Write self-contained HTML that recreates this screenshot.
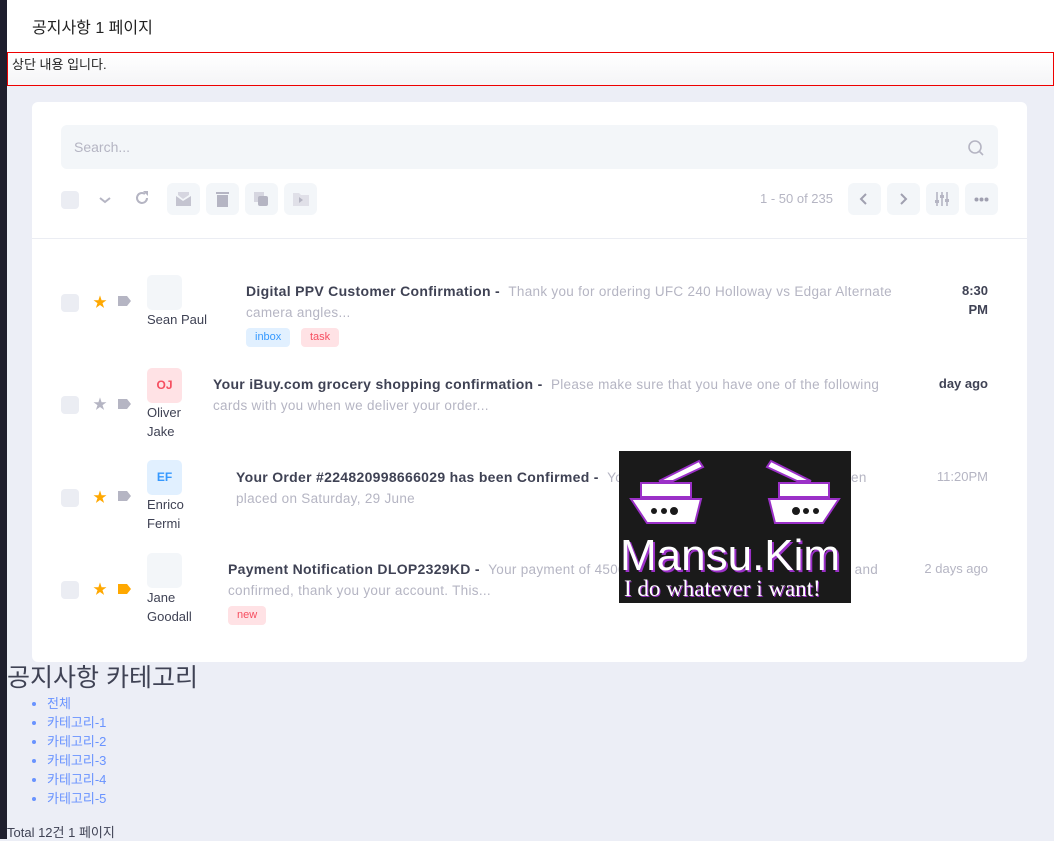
<!DOCTYPE html>
<html><head><meta charset="utf-8"><style>
*{box-sizing:border-box;margin:0;padding:0}
body{width:1054px;height:839px;overflow:hidden;background:#eceef6;font-family:"Liberation Sans","Noto Sans CJK KR",sans-serif;position:relative;color:#3f4254}
.a{position:absolute}
.strip{left:0;top:0;width:7px;height:839px;background:#1e1e2d}
.hdr{left:7px;top:0;width:1047px;height:52px;background:#fff}
.box{left:7px;top:52px;width:1047px;height:34px;border:1px solid #e00;background:linear-gradient(#fff,#f5f5f7)}
.card{left:32px;top:102px;width:995px;height:560px;background:#fff;border-radius:6px}
.btn{background:#f3f6f9;border-radius:6px}
.cb{width:18px;height:18px;background:#ebedf3;border-radius:4px}
.subj{font-size:14px;font-weight:bold;color:#3f4254;line-height:20px;letter-spacing:0.3px}
.prev{font-size:13.5px;color:#b5b5c3;font-weight:normal;letter-spacing:0.3px}
.name{font-size:13px;color:#3f4254;line-height:19px}
.tag{font-size:11px;border-radius:4px;height:19px;line-height:19px;padding:0 9px}
.av{width:35px;height:35px;border-radius:5px;background:#f3f6f9;font-size:12px;font-weight:bold;text-align:center;line-height:35px}
.time{font-size:13px;text-align:right;line-height:19px}
.star{font-size:14px}
li{font-size:13px;line-height:19px;color:#6993ff}
</style></head><body>
<div class="a strip"></div>
<div class="a hdr"><span class="a" style="left:25px;top:14px;font-size:16px;color:#222">공지사항 1 페이지</span></div>
<div class="a box"><span class="a" style="left:4px;top:1px;font-size:13px;color:#222">상단 내용 입니다.</span></div>
<div class="a card">
 <div class="a btn" style="left:29px;top:23px;width:937px;height:44px"><span class="a" style="left:13px;top:14px;font-size:14px;color:#b5b5c3">Search...</span>
  <svg class="a" style="left:906px;top:14px" width="18" height="18" viewBox="0 0 18 18"><circle cx="8" cy="8" r="6" fill="none" stroke="#b5b5c3" stroke-width="1.6"/><path d="M12.5 12.5l3.5 3.5" stroke="#b5b5c3" stroke-width="1.6"/></svg></div>
 <div class="a cb" style="left:29px;top:89px"></div>
 <svg class="a" style="left:66px;top:92px" width="14" height="12"><path d="M2 4l5 4 5-4" stroke="#b5b5c3" stroke-width="2" fill="none"/></svg>
 <svg class="a" style="left:102px;top:88px" width="16" height="16"><path d="M13 8a5 5 0 1 1-2-4" stroke="#b5b5c3" stroke-width="2" fill="none"/><path d="M9 1h5v5z" fill="#b5b5c3"/></svg>
 <div class="a btn" style="left:135px;top:81px;width:33px;height:32px"><svg class="a" style="left:9px;top:9px" width="15" height="14"><path d="M0 4l7 5 8-5v10H0z" fill="#c4c4d0"/><path d="M2 0h11v3L7 7 2 3z" fill="#d6d6e0"/></svg></div>
 <div class="a btn" style="left:174px;top:81px;width:33px;height:32px"><svg class="a" style="left:10px;top:8px" width="13" height="16"><rect x="1" y="4" width="11" height="12" fill="#b5b5c3"/><rect x="0" y="1" width="13" height="2" fill="#b5b5c3"/></svg></div>
 <div class="a btn" style="left:213px;top:81px;width:33px;height:32px"><svg class="a" style="left:9px;top:9px" width="15" height="15"><rect x="0" y="0" width="10" height="10" fill="#d6d6e0"/><rect x="4" y="4" width="10" height="10" rx="2" fill="#b5b5c3"/></svg></div>
 <div class="a btn" style="left:252px;top:81px;width:33px;height:32px"><svg class="a" style="left:9px;top:10px" width="16" height="13"><path d="M0 0h6l2 2h8v11H0z" fill="#e0e0e8"/><path d="M6 4l4 3-4 3z" fill="#b5b5c3"/></svg></div>
 <span class="a" style="left:728px;top:89px;font-size:13px;color:#b5b5c3">1 - 50 of 235</span>
 <div class="a btn" style="left:816px;top:81px;width:33px;height:32px"><svg class="a" style="left:11px;top:10px" width="10" height="12"><path d="M7 1L2 6l5 5" stroke="#a0a0b0" stroke-width="2" fill="none"/></svg></div>
 <div class="a btn" style="left:855px;top:81px;width:33px;height:32px"><svg class="a" style="left:12px;top:10px" width="10" height="12"><path d="M2 1l5 5-5 5" stroke="#a0a0b0" stroke-width="2" fill="none"/></svg></div>
 <div class="a btn" style="left:894px;top:81px;width:33px;height:32px"><svg class="a" style="left:9px;top:8px" width="15" height="16"><path d="M2 1v14M7 1v14M12 1v14" stroke="#b5b5c3" stroke-width="1.6"/><rect x="0" y="9" width="4" height="3" fill="#b5b5c3"/><rect x="5" y="4" width="4" height="3" fill="#b5b5c3"/><rect x="10" y="8" width="4" height="3" fill="#b5b5c3"/></svg></div>
 <div class="a btn" style="left:933px;top:81px;width:33px;height:32px"><svg class="a" style="left:9px;top:14px" width="15" height="5"><circle cx="2.5" cy="2.5" r="2" fill="#a0a0b0"/><circle cx="7.5" cy="2.5" r="2" fill="#a0a0b0"/><circle cx="12.5" cy="2.5" r="2" fill="#a0a0b0"/></svg></div>
 <div class="a" style="left:0;top:136px;width:995px;height:1px;background:#ebedf3"></div>
</div>
<!-- rows -->
<div class="a cb" style="left:61px;top:294px"></div>
<span class="a star" style="left:93px;top:292px;color:#ffa800">★</span>
<svg class="a" style="left:118px;top:296px" width="14" height="10"><path d="M0 0h9l4 5-4 5H0z" fill="#b5b5c3"/></svg>
<div class="a av" style="left:147px;top:275px"></div>
<span class="a name" style="left:147px;top:310px">Sean Paul</span>
<div class="a subj" style="left:246px;top:281px;width:660px">Digital PPV Customer Confirmation - &nbsp;<span class="prev">Thank you for ordering UFC 240 Holloway vs Edgar Alternate camera angles...</span></div>
<span class="a tag" style="left:246px;top:328px;background:#e1f0ff;color:#3699ff">inbox</span>
<span class="a tag" style="left:301px;top:328px;background:#ffe2e5;color:#f64e60">task</span>
<div class="a time" style="left:930px;top:281px;width:58px;font-weight:bold">8:30<br>PM</div>

<div class="a cb" style="left:61px;top:396px"></div>
<span class="a star" style="left:93px;top:394px;color:#b5b5c3">★</span>
<svg class="a" style="left:118px;top:399px" width="14" height="10"><path d="M0 0h9l4 5-4 5H0z" fill="#b5b5c3"/></svg>
<div class="a av" style="left:147px;top:368px;background:#ffe2e5;color:#f64e60">OJ</div>
<span class="a name" style="left:147px;top:403px">Oliver<br>Jake</span>
<div class="a subj" style="left:213px;top:374px;width:690px">Your iBuy.com grocery shopping confirmation - &nbsp;<span class="prev">Please make sure that you have one of the following cards with you when we deliver your order...</span></div>
<div class="a time" style="left:900px;top:374px;width:88px;font-weight:bold">day ago</div>

<div class="a cb" style="left:61px;top:489px"></div>
<span class="a star" style="left:93px;top:487px;color:#ffa800">★</span>
<svg class="a" style="left:118px;top:491px" width="14" height="10"><path d="M0 0h9l4 5-4 5H0z" fill="#b5b5c3"/></svg>
<div class="a av" style="left:147px;top:460px;background:#e1f0ff;color:#3699ff">EF</div>
<span class="a name" style="left:147px;top:495px">Enrico<br>Fermi</span>
<div class="a subj" style="left:236px;top:467px;width:660px">Your Order #224820998666029 has been Confirmed - &nbsp;<span class="prev">Your Order #224820998666029 has been placed on Saturday, 29 June</span></div>
<div class="a time" style="left:910px;top:467px;width:78px;color:#b5b5c3">11:20PM</div>

<div class="a cb" style="left:61px;top:581px"></div>
<span class="a star" style="left:93px;top:579px;color:#ffa800">★</span>
<svg class="a" style="left:118px;top:584px" width="14" height="10"><path d="M0 0h9l4 5-4 5H0z" fill="#ffa800"/></svg>
<div class="a av" style="left:147px;top:553px"></div>
<span class="a name" style="left:147px;top:588px">Jane<br>Goodall</span>
<div class="a subj" style="left:228px;top:559px;width:665px">Payment Notification DLOP2329KD - &nbsp;<span class="prev">Your payment of 4500 USD to AirCar has been authorized and confirmed, thank you your account. This...</span></div>
<span class="a tag" style="left:228px;top:606px;background:#ffe2e5;color:#f64e60">new</span>
<div class="a time" style="left:900px;top:559px;width:88px;color:#b5b5c3">2 days ago</div>

<!-- logo image -->
<div class="a" style="left:619px;top:451px;width:232px;height:152px;background:#1a1a1a;overflow:hidden">
<svg class="a" style="left:0;top:0" width="232" height="95">
<g fill="#fff" stroke="#9b30c8" stroke-width="2">
<path d="M40 30l40-20 4 6-30 14zM22 32h50v14H22z"/><path d="M12 48h70l-6 24H28z"/>
<path d="M192 30l-40-20-4 6 30 14zM160 32h50v14h-50z"/><path d="M150 48h70l-16 24h-48z"/>
</g>
<g fill="#1a1a1a"><circle cx="35" cy="60" r="3"/><circle cx="45" cy="60" r="3"/><circle cx="55" cy="60" r="4"/><circle cx="177" cy="60" r="4"/><circle cx="187" cy="60" r="3"/><circle cx="197" cy="60" r="3"/></g>
</svg>
<span class="a" style="left:1px;top:80px;font-size:44px;color:#fff;font-family:'Liberation Sans',sans-serif;text-shadow:2px 2px 0 #9b30c8">Mansu.Kim</span>
<span class="a" style="left:5px;top:125px;font-size:23px;color:#fff;font-family:'Liberation Serif',serif;text-shadow:1px 1px 0 #9b30c8">I do whatever i want!</span>
</div>

<div class="a" style="left:7px;top:658px;font-size:25px;color:#3f4254">공지사항 카테고리</div>
<ul class="a" style="left:47px;top:694px;list-style:disc">
<li>전체</li><li>카테고리-1</li><li>카테고리-2</li><li>카테고리-3</li><li>카테고리-4</li><li>카테고리-5</li>
</ul>
<div class="a" style="left:7px;top:822px;font-size:13px;color:#3f4254">Total 12건 1 페이지</div>
</body></html>
